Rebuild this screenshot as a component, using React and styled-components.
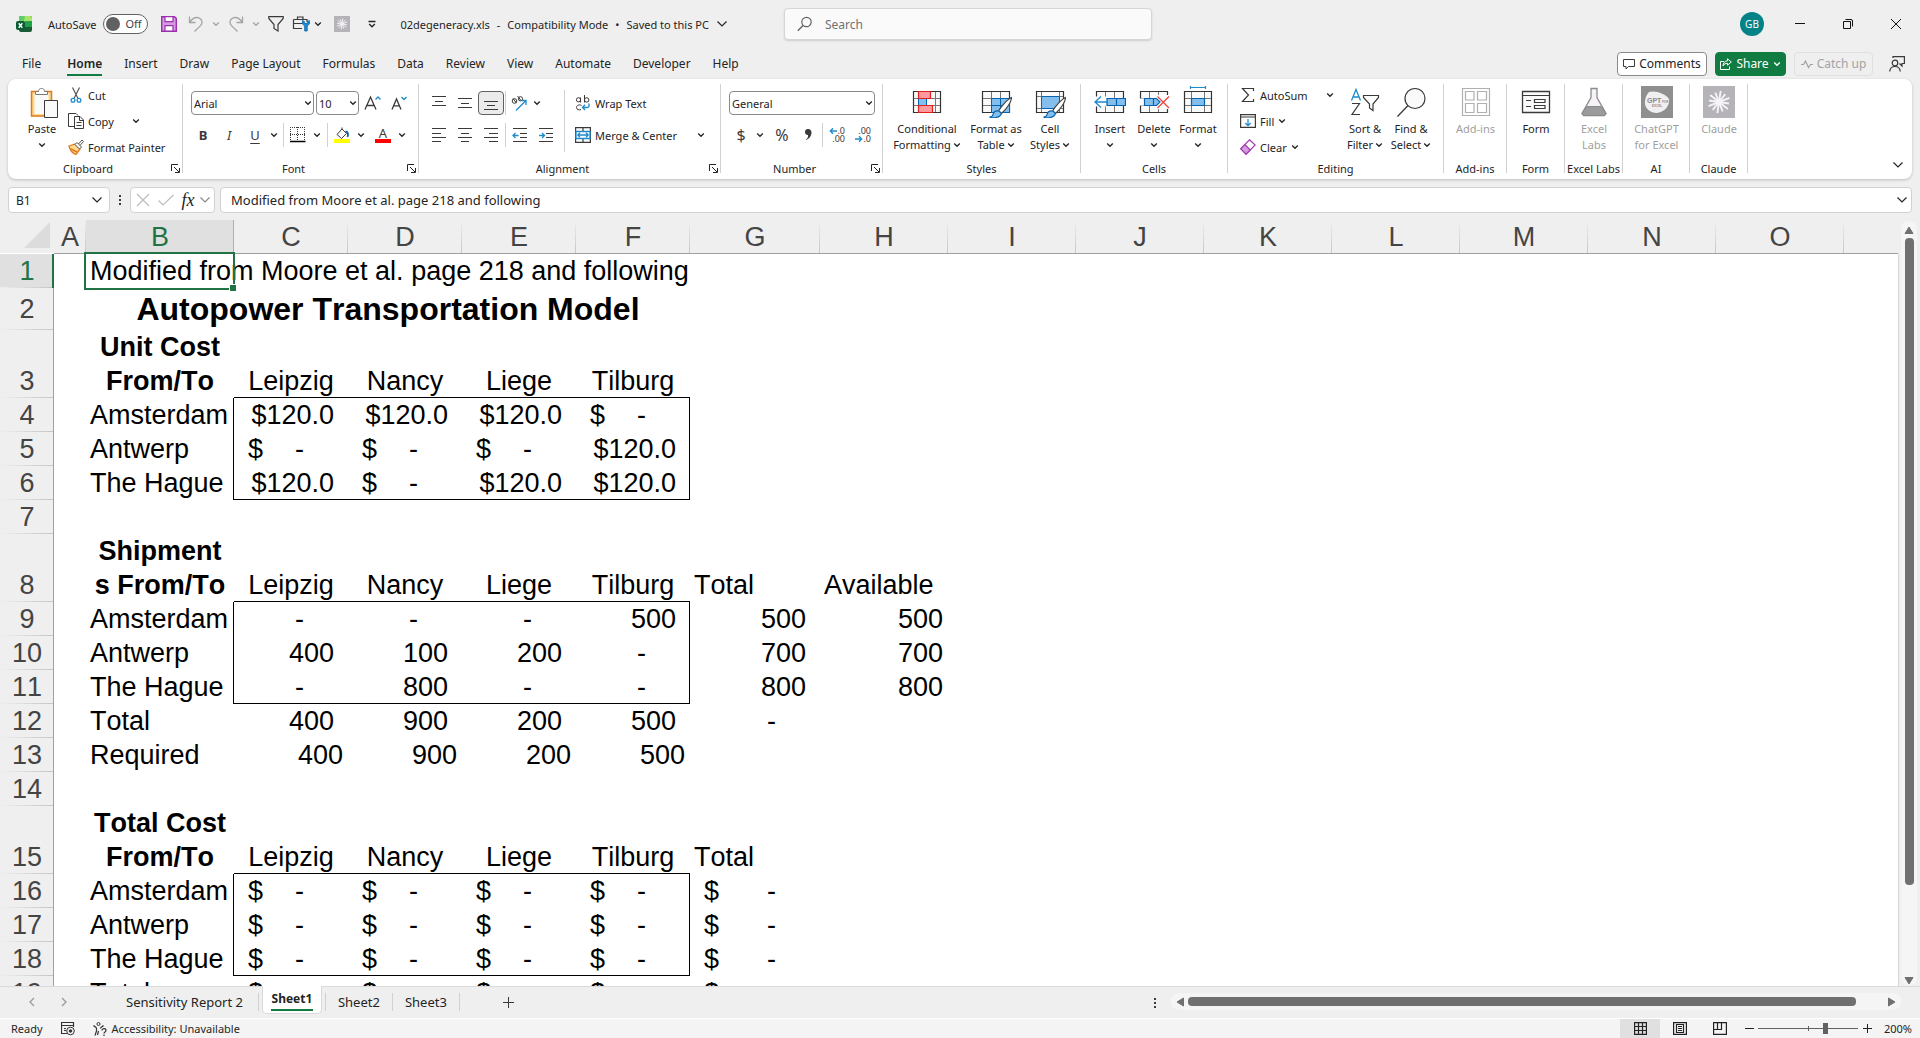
import React from "react";
import styled, { createGlobalStyle } from "styled-components";

const BLUE = "#1e8bcd";
const DARK_BLUE = "#0563af";
const LIGHT_BLUE = "#83beec";
const GREEN = "#107c41";

const GlobalStyle = createGlobalStyle`
  *, *::before, *::after { box-sizing: border-box; }
  body { margin: 0; background: #efefef; }
  body, button, input, select {
    font-family: "Noto Sans", "Open Sans", sans-serif;
    font-size: 11px;
    color: #242424;
  }
  button { border: 0; background: none; padding: 0; margin: 0; }
`;

/* ---------- shared parts ---------- */

const Page = styled.div`
  display: flex;
  flex-direction: column;
  height: 100vh;
  overflow: hidden;
  background: #efefef;
`;

const Svg = styled.svg`
  display: block;
  flex: none;
  fill: none;
  stroke: ${(p) => p.$color || "#3b3a39"};
  stroke-width: 1;
`;

const Icon = ({ w = 16, h = w, color, children }) => (
  <Svg width={w} height={h} viewBox={`0 0 ${w} ${h}`} $color={color} aria-hidden="true">
    {children}
  </Svg>
);

const Caret = ({ color = "#242424" }) => (
  <Icon w={8} h={6} color={color}>
    <path d="M1.2 1.5 4 4.3 6.8 1.5" strokeWidth="1.3" />
  </Icon>
);

const WideCaret = ({ color = "#242424" }) => (
  <Icon w={12} h={8} color={color}>
    <path d="M1.5 1.5 6 6 10.5 1.5" strokeWidth="1.2" />
  </Icon>
);

const IconButton = styled.button`
  display: flex;
  align-items: center;
  justify-content: center;
  flex: none;
  width: ${(p) => p.$w || 26}px;
  height: 24px;
  border-radius: 4px;
  border: 1px solid ${(p) => (p.$on ? "#616161" : "transparent")};
  background: ${(p) => (p.$on ? "#ebebeb" : "transparent")};
`;

const CaretButton = ({ label, color }) => (
  <IconButton $w={12} aria-label={label}>
    <Caret color={color} />
  </IconButton>
);

const Dots = () => (
  <Icon w={4} h={12}>
    <path d="M1 1h2v2h-2zM1 5h2v2h-2zM1 9h2v2h-2z" fill="#3b3a39" stroke="none" />
  </Icon>
);

/* ---------- title bar ---------- */

const TitleBar = styled.header`
  display: grid;
  grid-template-columns: minmax(0, 1fr) 368px minmax(0, 1fr);
  align-items: center;
  flex: none;
  height: 48px;
  padding-left: 16px;
`;

const QuickAccess = styled.div`
  display: flex;
  align-items: center;
  white-space: nowrap;
`;

const AutoSave = styled.label`
  display: flex;
  align-items: center;
  gap: 7px;
  margin: 0 8px 0 16px;
`;

const Toggle = styled.input`
  appearance: none;
  display: flex;
  align-items: center;
  width: 45px;
  height: 20px;
  margin: 0;
  padding: 0 5px 0 2px;
  border: 1px solid #616161;
  border-radius: 10px;
  background: #fff;
  &::before {
    content: "";
    width: 14px;
    height: 14px;
    border-radius: 50%;
    background: #616161;
  }
  &::after {
    content: "Off";
    margin-left: 5px;
    color: #424242;
    line-height: 16px;
  }
`;

const DocumentName = styled.button`
  display: flex;
  align-items: center;
  gap: 7px;
  margin-left: 16px;
`;

const SearchBox = styled.label`
  display: flex;
  align-items: center;
  gap: 12px;
  height: 32px;
  padding: 0 12px;
  border: 1px solid #d6d6d6;
  border-radius: 4px;
  background: #fafafa;
  box-shadow: 0 1px 2px rgba(0, 0, 0, 0.14);
`;

const SearchInput = styled.input`
  flex: 1;
  min-width: 0;
  border: 0;
  padding: 0;
  background: none;
  font-size: 12px;
  outline: none;
  &::placeholder { color: #707070; opacity: 1; }
`;

const WindowControls = styled.div`
  display: flex;
  align-items: center;
  justify-content: flex-end;
`;

const Avatar = styled.button`
  width: 24px;
  height: 24px;
  margin-right: 12px;
  border-radius: 50%;
  background: #038387;
  color: #fff;
  font-size: 10px;
`;

/* ---------- ribbon tabs ---------- */

const TabRow = styled.nav`
  display: flex;
  align-items: center;
  justify-content: space-between;
  flex: none;
  height: 31px;
  padding: 0 7px 0 12px;
`;

const Tabs = styled.div`
  display: flex;
  align-self: flex-end;
  gap: 2px;
  margin-bottom: 3px;
`;

const Tab = styled.button`
  padding: 0 10px;
  font-size: 12px;
  white-space: nowrap;
  font-weight: ${(p) => (p.$active ? 600 : 400)};
  &:first-child { margin-right: 4px; }
  span {
    display: block;
    height: 22px;
    line-height: 20px;
    border-bottom: 2px solid ${(p) => (p.$active ? GREEN : "transparent")};
  }
`;

const TabActions = styled.div`
  display: flex;
  align-items: center;
  gap: 8px;
`;

const ActionButton = styled.button`
  display: flex;
  align-items: center;
  justify-content: center;
  gap: 4px;
  height: 24px;
  width: ${(p) => p.$w}px;
  border: 1px solid ${(p) => p.$border};
  border-radius: 4px;
  background: ${(p) => p.$bg};
  color: ${(p) => p.$fg};
  font-size: 12px;
  white-space: nowrap;
`;

/* ---------- ribbon ---------- */

const Ribbon = styled.section`
  display: flex;
  flex: none;
  height: 100px;
  margin: 0 8px;
  border-radius: 8px;
  background: #fff;
  box-shadow: 0 1px 3px rgba(0, 0, 0, 0.22);
`;

const GroupBox = styled.div`
  display: flex;
  flex-direction: column;
  flex: none;
  width: ${(p) => p.$w}px;
  padding-top: 3px;
  background: linear-gradient(#d1d1d1, #d1d1d1) right 5px / 1px 89px no-repeat;
`;

const GroupBody = styled.div`
  display: flex;
  height: 78px;
  padding-left: ${(p) => p.$pad || 0}px;
  justify-content: ${(p) => (p.$center ? "center" : "flex-start")};
`;

const GroupFooter = styled.div`
  display: flex;
  align-items: center;
  height: 17px;
  padding-right: 1px;
`;

const GroupLabel = styled.span`
  flex: 1;
  text-align: center;
  white-space: nowrap;
  line-height: 16px;
`;

const Launcher = styled.button`
  display: flex;
  width: 14px;
  height: 14px;
  align-items: center;
  justify-content: center;
`;

const Group = ({ name, w, pad, center, launcher, children }) => (
  <GroupBox $w={w}>
    <GroupBody $pad={pad} $center={center}>{children}</GroupBody>
    <GroupFooter>
      <GroupLabel>{name}</GroupLabel>
      {launcher && (
        <Launcher aria-label={`${name} settings`}>
          <Icon w={9} color="#242424">
            <path d="M.5 7V.5H7M3 3l5 5M8.5 4v4.5H4" />
          </Icon>
        </Launcher>
      )}
    </GroupFooter>
  </GroupBox>
);

const BigButton = styled.button`
  display: flex;
  flex-direction: column;
  align-items: center;
  flex: none;
  width: ${(p) => p.$w}px;
  padding-top: 4px;
  color: ${(p) => (p.disabled ? "#a0a0a0" : "#242424")};
`;

const BigLabel = styled.span`
  display: flex;
  align-items: center;
  justify-content: center;
  gap: 2px;
  height: 16px;
  line-height: 16px;
  white-space: nowrap;
`;

const BigIcon = styled.span`
  display: block;
  height: 35px;
`;

const Big = ({ w, icon, lines, caret, ownCaret, disabled }) => (
  <BigButton $w={w} disabled={disabled}>
    <BigIcon>{icon}</BigIcon>
    {lines.map((line, i) => (
      <BigLabel key={line}>
        {line}
        {caret && i === lines.length - 1 && <Caret />}
      </BigLabel>
    ))}
    {ownCaret && <BigLabel><Caret /></BigLabel>}
  </BigButton>
);

const Stack = styled.div`
  display: flex;
  flex-direction: column;
  width: ${(p) => p.$w}px;
`;

const CommandRow = styled.div`
  display: flex;
  align-items: center;
  height: 26px;
`;

const Command = styled.button`
  display: flex;
  align-items: center;
  gap: 4px;
  height: 24px;
  white-space: nowrap;
`;

const Spread = styled.div`
  display: flex;
  width: ${(p) => p.$w}px;
`;

const Tools = styled.div`
  display: flex;
  flex-direction: column;
  gap: 8px;
  padding-top: 9px;
`;

const ToolRow = styled.div`
  display: flex;
  align-items: center;
  height: 24px;
`;

const Rule = styled.span`
  flex: none;
  width: 1px;
  height: ${(p) => p.$h ?? 24}px;
  margin: ${(p) => p.$margin || "0 1px"};
  background: #d1d1d1;
`;

const SelectBox = styled.div`
  display: grid;
  align-items: center;
  width: ${(p) => p.$w}px;
  height: 24px;
  margin: 0 1px;
  > * { grid-area: 1 / 1; }
  svg {
    justify-self: end;
    margin-right: 2px;
    pointer-events: none;
  }
`;

const Select = styled.select`
  appearance: none;
  width: 100%;
  height: 24px;
  padding: 0 2px;
  border: 1px solid #8a8a8a;
  border-radius: 4px;
  background: #fff;
`;

const Dropdown = ({ w, label, value }) => (
  <SelectBox $w={w}>
    <Select aria-label={label} defaultValue={value}>
      <option>{value}</option>
    </Select>
    <Caret />
  </SelectBox>
);

const Letter = styled.span`
  font-size: ${(p) => p.$size || 13}px;
  line-height: 18px;
  color: #3b3a39;
  font-weight: ${(p) => (p.$bold ? 700 : 400)};
  font-style: ${(p) => (p.$italic ? "italic" : "normal")};
  text-decoration: ${(p) => (p.$under ? "underline" : "none")};
  text-underline-offset: 3px;
`;

const ColorLetter = styled.span`
  width: 16px;
  border-bottom: 4px solid #f00;
  font-size: 13px;
  line-height: 12px;
  text-align: center;
  color: #3b3a39;
`;

const Spacer = styled.span`
  flex: 1;
`;

const Collapse = styled.button`
  align-self: flex-end;
  display: flex;
  width: 28px;
  height: 28px;
  align-items: center;
  justify-content: center;
`;

/* ---------- formula bar ---------- */

const FormulaBar = styled.div`
  display: flex;
  align-items: center;
  flex: none;
  height: 26px;
  margin: 8px 8px 7px;
`;

const Field = styled.div`
  display: flex;
  align-items: center;
  flex: ${(p) => (p.$w ? "none" : 1)};
  width: ${(p) => (p.$w ? `${p.$w}px` : "auto")};
  height: 26px;
  border: 1px solid #d1d1d1;
  border-radius: 4px;
  background: #fff;
  padding-right: 3px;
  justify-content: space-between;
`;

const FieldInput = styled.input`
  flex: 1;
  min-width: 0;
  height: 22px;
  border: 0;
  padding: 0 0 0 ${(p) => p.$pad}px;
  background: none;
  outline: none;
  font-size: ${(p) => p.$size || 12}px;
`;

const DotsSlot = styled.span`
  display: flex;
  justify-content: center;
  width: 20px;
`;

const FxLabel = styled.span`
  font-family: "Liberation Serif", serif;
  font-style: italic;
  font-size: 18px;
  line-height: 20px;
`;

/* ---------- sheet ---------- */

const SheetArea = styled.main`
  display: flex;
  flex: 1;
  min-height: 0;
`;

const GridView = styled.div`
  flex: 1;
  min-width: 0;
  overflow: hidden;
`;

const Grid = styled.table`
  width: 100%;
  table-layout: fixed;
  border-collapse: separate;
  border-spacing: 0;
  font-family: "Liberation Sans", Arial, sans-serif;
  font-size: 27px;
  font-kerning: none;
  line-height: 34px;
  color: #000;
`;

const ColHead = styled.th`
  height: 34px;
  padding: 0;
  font-weight: 400;
  line-height: 32px;
  color: ${(p) => (p.$active ? "#217346" : "#444")};
  background: ${(p) =>
    p.$active
      ? "linear-gradient(#b0b0b0, #b0b0b0) right top / 1px 100% no-repeat #e0e0e0"
      : p.$last
      ? "#efefef"
      : "linear-gradient(#efefef, #c4c4c4) right top / 1px 100% no-repeat #efefef"};
  box-shadow: inset 0 -1px 0 #a0a0a0;
`;

const Corner = styled.td`
  height: 34px;
  padding: 0 4px 4px 0;
  svg { margin-left: auto; }
`;

const RowHead = styled.th`
  padding: 0;
  vertical-align: ${(p) => (p.$middle ? "middle" : "bottom")};
  font-weight: 400;
  color: ${(p) => (p.$active ? "#217346" : "#444")};
  background: ${(p) =>
    `linear-gradient(to right, #efefef, #c4c4c4) left bottom / 100% 1px no-repeat ${p.$active ? "#e0e0e0" : "#efefef"}`};
  box-shadow: inset ${(p) => (p.$active ? "-2px 0 0 #217346" : "-1px 0 0 #a0a0a0")};
`;

const Row = styled.tr`
  height: ${(p) => p.$h}px;
`;

const INK = "#000";
const edges = {
  t: `inset 0 1px 0 ${INK}`,
  r: `inset -1px 0 0 ${INK}`,
  b: `inset 0 -1px 0 ${INK}`,
};

const Cell = styled.td`
  position: ${(p) => (p.$anchor ? "relative" : "static")};
  padding: 0 ${(p) => p.$right ?? 4}px 0 ${(p) => p.$left ?? 4}px;
  vertical-align: ${(p) => (p.$title ? "middle" : "bottom")};
  white-space: nowrap;
  text-align: ${(p) => p.$align || "left"};
  font-weight: ${(p) => (p.$bold ? 700 : 400)};
  font-size: ${(p) => (p.$title ? 32 : 27)}px;
  box-shadow: ${(p) => (p.$edges ? p.$edges.split("").map((e) => edges[e]).join(", ") : "none")};
`;

const Blank = styled.td`
  padding: 0;
`;

const Money = styled.span`
  display: flex;
  justify-content: space-between;
`;

const Selection = styled.span`
  position: absolute;
  inset: -2px -1px -2px -2px;
  border: 2px solid #217346;
  pointer-events: none;
  &::after {
    content: "";
    position: absolute;
    right: -3px;
    bottom: -3px;
    width: 6px;
    height: 6px;
    background: #217346;
    box-shadow: -1px -1px 0 #fff;
  }
`;

const VScroll = styled.div`
  display: flex;
  flex-direction: column;
  align-items: center;
  flex: none;
  width: 16px;
  margin: 1px 3px 0 2px;
  padding: 5px 0 1px;
  border-radius: 8px;
  background: #f5f5f5;
`;

const VTrack = styled.div`
  flex: 1;
  width: 9px;
  margin: 4px 0;
`;

const VThumb = styled.div`
  width: 9px;
  height: 88%;
  border-radius: 4px;
  background: #707070;
`;

const SheetSide = styled.div`
  flex: none;
  width: 1px;
  margin-top: 34px;
  background: #d6d6d6;
`;

/* ---------- bottom bars ---------- */

const SheetTabs = styled.nav`
  display: flex;
  align-items: flex-start;
  flex: none;
  height: 32px;
  box-shadow: inset 0 1px 0 #dadada;
`;

const NavArrow = styled.button`
  display: flex;
  align-items: center;
  justify-content: center;
  width: 32px;
  height: 32px;
`;

const SheetTab = styled.button`
  height: 32px;
  padding: 0 ${(p) => p.$pad || 12}px;
  font-size: 13px;
  white-space: nowrap;
`;

const ActiveSheetTab = styled.button`
  height: 28px;
  width: 60px;
  margin: 0 3px;
  padding: 0 8px;
  border: solid #dadada;
  border-width: 0 1px 1px;
  border-radius: 0 0 5px 5px;
  background: #fff;
  font-size: 12px;
  font-weight: 700;
  span {
    display: block;
    line-height: 20px;
    border-bottom: 2px solid ${GREEN};
  }
`;

const HScroll = styled.div`
  display: flex;
  align-items: center;
  width: 730px;
  height: 17px;
  margin: 7px 19px 0 14px;
  padding: 0 5px;
  border-radius: 8px;
  background: #f5f5f5;
`;

const HTrack = styled.div`
  flex: 1;
  margin: 0 4px;
`;

const HThumb = styled.div`
  width: 96%;
  height: 9px;
  border-radius: 4px;
  background: #707070;
`;

const DotsTall = styled.span`
  display: flex;
  align-items: center;
  height: 34px;
`;

const StatusBar = styled.footer`
  display: flex;
  align-items: center;
  flex: none;
  height: 20px;
  padding: 0 8px 0 11px;
  border-top: 1px solid #fff;
  background: #f4f4f4;
`;

const StatusItem = styled.span`
  display: flex;
  align-items: center;
  gap: 5px;
  margin-right: 18px;
  line-height: 18px;
`;

const ViewButton = styled.button`
  display: flex;
  align-items: center;
  justify-content: center;
  width: 40px;
  height: 19px;
  background: ${(p) => (p.$on ? "#e0e0e0" : "transparent")};
`;

const ZoomButton = styled.button`
  display: flex;
  align-items: center;
  justify-content: center;
  width: 18px;
  height: 18px;
`;

const ZoomSlider = styled.input`
  appearance: none;
  width: 100px;
  height: 12px;
  margin: 0;
  background:
    linear-gradient(#616161, #616161) center / 100% 1px no-repeat,
    linear-gradient(#616161, #616161) center / 1px 5px no-repeat;
  &::-webkit-slider-thumb {
    appearance: none;
    width: 5px;
    height: 11px;
    background: #616161;
  }
`;

const ZoomValue = styled.span`
  width: 36px;
  text-align: right;
`;

/* ---------- drawings ---------- */

const ExcelLogo = () => (
  <Icon w={16}>
    <g stroke="none">
      <rect x="3" y="0" width="13" height="16" rx="2" fill="#185c37" />
      <path d="M5 0h5v6H3V2a2 2 0 0 1 2-2z" fill="#5fd06a" />
      <path d="M9 0h5a2 2 0 0 1 2 2v4H8z" fill="#a9e56b" />
      <path d="M9 5h7v6H9z" fill="#21a04a" />
      <rect x="0" y="5" width="9" height="9" rx="2" fill="#0b5c35" />
    </g>
    <path d="M2.7 7.2 6.3 11.8M6.3 7.2 2.7 11.8" stroke="#fff" strokeWidth="1.4" />
  </Icon>
);

const SaveIcon = () => (
  <Icon color="#9b2fae">
    <path d="M.7.7H13.5l1.800 1.800v12.800H.7z" fill="#d59be0" strokeWidth="1.4" />
    <path d="M4 .7h8v5H4zM4 15V9.7h8V15z" fill="#fff" strokeWidth="1.2" />
  </Icon>
);

const UndoIcon = () => (
  <Icon color="#a3a3a3">
    <path d="M1.5.5V6.5H7.5M1.8 6.2C4 3 7 1 10 1.6c4 .9 5.200 5 2.5 8L6.500 15.500" strokeWidth="1.3" />
  </Icon>
);

const RedoIcon = () => (
  <Icon color="#a3a3a3">
    <path d="M14.500.5V6.500H8.500M14.200 6.200C12 3 9 1 6 1.600c-4 .9-5.200 5-2.500 8L9.500 15.500" strokeWidth="1.3" />
  </Icon>
);

const FunnelIcon = () => (
  <Icon>
    <path d="M.8.7H15.200V2.500L10 8.500V15L6 12.500V8.500L.8 2.500z" strokeWidth="1.2" />
  </Icon>
);

const ToolboxIcon = () => (
  <Icon w={18}>
    <path d="M1.500 4.500H15V7M1.500 4.500V13.500H10M5.500 4.500V2H11V4.500M1.500 8.500H10" strokeWidth="1.2" />
    <path d="M10.500 5.500V9L12.700 11V16H15.200V11L17.400 9V5.500L15.500 6.500V8.500H12.400V6.500z" fill={BLUE} stroke={DARK_BLUE} strokeWidth=".8" />
  </Icon>
);

const BURST = Array.from({ length: 12 }, (_, i) => {
  const a = (i * Math.PI) / 6 + 0.15;
  const r = i % 2 ? 1 : 0.9;
  return [Math.cos(a) * r, Math.sin(a) * r];
});

const ClaudeIcon = ({ size }) => (
  <Icon w={size}>
    <rect width={size} height={size} fill="#b5b3b7" stroke="none" />
    {BURST.map(([x, y], i) => (
      <line
        key={i}
        x1={size / 2}
        y1={size / 2}
        x2={size / 2 + x * size * 0.35}
        y2={size / 2 + y * size * 0.35}
        stroke="#f6f4f8"
        strokeWidth={size / 17}
      />
    ))}
  </Icon>
);

const PasteIcon = () => (
  <Icon w={32}>
    <path d="M5.500 5.500H25.500V30H5.500z" fill="#fbd98d" stroke="#e07a1f" strokeWidth="1.500" />
    <path d="M8.500 7H22.500V28H8.500z" fill="#fafafa" stroke="none" />
    <path d="M9.500 8.500V5.500H12.500C13 2.500 14 2.500 15.500 2.500s2.500 0 3 3H21.500V8.500z" fill="#fff" stroke="#777" />
    <path d="M18.500 14.500H31.500V31.500H18.500z" fill="#fafafa" />
  </Icon>
);

const CutIcon = () => (
  <Icon>
    <path d="M4.500.5 10 11.500M11.500.5 6 11.500" stroke="#555" strokeWidth="1.200" />
    <circle cx="5" cy="13.300" r="1.900" stroke={BLUE} strokeWidth="1.300" />
    <circle cx="11" cy="13.300" r="1.900" stroke={BLUE} strokeWidth="1.300" />
  </Icon>
);

const CopyIcon = () => (
  <Icon>
    <path d="M6 13.500H.5V.5H8L10 2.500" fill="none" />
    <path d="M6.500 3.500H12L15.500 7V15.500H6.500z" fill="#fafafa" />
    <path d="M11.500 3.500V7.500H15.500M8.500 9.500h5M8.500 12.500h5" />
  </Icon>
);

const PainterIcon = () => (
  <Icon>
    <path d="M1 7 7 5l5 5-4 5.500C5.500 14.500 2 11.500 1 7z" fill="#fbd98d" stroke="#e07a1f" strokeWidth="1.300" />
    <path d="M3 10 9 13" stroke="#e07a1f" strokeWidth="1.500" />
    <path d="M7 5.500 9 3.500l4.500 4.500L11.500 10zM10.500 5 14 1l1.500 1.500L12 6.500" fill="#fff" stroke="#555" />
  </Icon>
);

const GrowIcon = ({ down }) => (
  <Icon w={18}>
    <path d={down ? "M2 15.500 6.500 5 11 15.500M3.700 11.800H9.300" : "M1 15.500 6.500 3 12 15.500M3 11.500H10"} strokeWidth="1.300" />
    <path d={down ? "M11.500 3 14 5.500 16.500 3" : "M11.500 5.500 14 3 16.500 5.500"} stroke={BLUE} strokeWidth="1.400" />
  </Icon>
);

const BorderIcon = () => (
  <Icon>
    <path d="M0 .5H15M.5 0V14M14.500 0V14M7.500 0V14M0 7.500H15" strokeDasharray="1 1" />
    <path d="M0 14.500H15.500" stroke="#000" strokeWidth="1.500" />
  </Icon>
);

const FillColorIcon = () => (
  <Icon>
    <path d="M3 7.500 8 2l4.500 4.500L7.500 11.500z" fill="#fafafa" />
    <path d="M8 2V.5" />
    <path d="M11.500 4.500C14 4.500 14.500 7 13.500 10" stroke={DARK_BLUE} strokeWidth="1.800" />
    <path d="M0 12H16V16H0z" fill="#ff0" stroke="none" />
  </Icon>
);

const LINES = {
  top: "M1 1.500H15M4 6.500H12M1 10.500H15",
  middle: "M1 3.500H15M4 8.500H12M1 12.500H15",
  bottom: "M1 6.500H15M4 10.500H12M1 14.500H15",
  left: "M1 1.500H15M1 6.500H10M1 10.500H15M1 14.500H10",
  center: "M1 1.500H15M4 6.500H12M1 10.500H15M4 14.500H12",
  right: "M1 1.500H15M6 6.500H15M1 10.500H15M6 14.500H15",
};

const LinesIcon = ({ kind }) => (
  <Icon><path d={LINES[kind]} /></Icon>
);

const IndentIcon = ({ out }) => (
  <Icon>
    <path d="M1 1.500H15M8 6.500H15M8 10.500H15M1 14.500H15" />
    <path d={out ? "M1 8.500H6.500M3.500 6 1 8.500 3.500 11" : "M1 8.500H6.500M4 6 6.500 8.500 4 11"} stroke={BLUE} strokeWidth="1.300" />
  </Icon>
);

const OrientIcon = () => (
  <Icon>
    <circle cx="3.500" cy="6" r="2.300" />
    <path d="M2 3.500 5.500 8M6.500 1 10 5.500" />
    <circle cx="9.500" cy="3.800" r="2.100" />
    <path d="M5 15.500 15 5.500M10.500 5.500H15V10" stroke={BLUE} strokeWidth="1.300" />
  </Icon>
);

const WrapIcon = () => (
  <Icon>
    <circle cx="3.500" cy="4.800" r="2.100" />
    <path d="M5.500 2.500V7.500M9.500 0V7.500M6.500 10.500C4 9 1.500 10.500 1.500 12.500S4 15.500 6 14.500" />
    <circle cx="11.700" cy="4.900" r="2.200" />
    <path d="M13.500 8.500C15 10.500 14 12.500 12 12.500H7.500M10 9.800 7.500 12.500 10 15" stroke={BLUE} strokeWidth="1.300" />
  </Icon>
);

const MergeIcon = () => (
  <Icon>
    <path d="M.6.6H15.400V15.400H.6zM8 .5V4M8 12V15.500" strokeWidth="1.200" />
    <path d="M1 4.500H15V11.500H1z" fill="#fff" stroke={BLUE} strokeWidth="1.300" />
    <path d="M3 8H13M5 5.800 2.800 8 5 10.200M11 5.800 13.200 8 11 10.200" stroke={BLUE} strokeWidth="1.300" />
  </Icon>
);

const DecimalText = styled.span`
  display: grid;
  grid-template-columns: 8px 8px;
  font-size: 9px;
  line-height: 8px;
  color: #3b3a39;
  justify-items: end;
`;

const DecimalArrow = ({ right }) => (
  <Icon w={8}>
    <path d={right ? "M0 4H7M4 1.300 6.700 4 4 6.700" : "M8 4H1M4 1.300 1.300 4 4 6.700"} stroke={BLUE} strokeWidth="1.300" />
  </Icon>
);

const GridLines = ({ x = [11, 20], y = [12, 19] }) => (
  <>
    <path d="M2.500 5.500H29.500V26.500H2.500z" fill="#fafafa" stroke="#333" strokeWidth="1.200" />
    <path d={x.map((v) => `M${v}.500 6V26`).join("") + y.map((v) => `M3 ${v}.500H29`).join("")} stroke="#777" />
  </>
);

const Brush = () => (
  <>
    <path d="M31.500 11.500C28 13 21.500 20 18.500 25l3 2.500C26.500 23 31.500 16 31.500 11.500z" fill="#fff" stroke="#444" strokeWidth="1.200" />
    <path d="M19 25c-4-.5-5.500 1-6 3.500-.3 1.800-1.500 2.500-3.500 2.500C12 32.300 19.500 32.500 21.500 27.500z" fill={LIGHT_BLUE} stroke={DARK_BLUE} strokeWidth="1.200" />
  </>
);

const ConditionalIcon = () => (
  <Icon w={32}>
    <GridLines x={[7, 24]} />
    <path d="M7.500 12.500H15.500V19.500H7.500z" fill={LIGHT_BLUE} stroke={DARK_BLUE} />
    <path d="M7.500 5.500H19.500V12.500H7.500zM7.500 19.500H21.500V26.500H7.500z" fill="#ff9aa0" stroke="#e0201b" strokeWidth="1.200" />
  </Icon>
);

const TableIcon = () => (
  <Icon w={32}>
    <GridLines />
    <path d="M11.500 12.500H29.500V26.500H11.500zM20.500 12.500V26.500M11.500 19.500H29.500" fill={LIGHT_BLUE} stroke={DARK_BLUE} />
    <Brush />
  </Icon>
);

const CellStylesIcon = () => (
  <Icon w={32}>
    <GridLines x={[7, 25]} y={[10, 22]} />
    <path d="M7.500 10.500H25.500V22.500H7.500z" fill={LIGHT_BLUE} stroke={DARK_BLUE} />
    <Brush />
  </Icon>
);

const InsertIcon = () => (
  <Icon w={32}>
    <GridLines />
    <path d="M0 10.500H13V20.500H0z" fill="#fff" stroke="none" />
    <path d="M13 12.500H31.500V19.500H13zM22.500 12.500V19.500" fill={LIGHT_BLUE} stroke={DARK_BLUE} strokeWidth="1.200" />
    <path d="M14 16H1M7 10.500 1 16l6 5.500" stroke={BLUE} strokeWidth="1.300" />
  </Icon>
);

const DeleteIcon = () => (
  <Icon w={32}>
    <GridLines />
    <path d="M0 12.500H6V19.500H0zM19 9H32V23H19z" fill="#fff" stroke="none" />
    <path d="M6.500 12.500H18.500L22 16 18.500 19.500H6.500zM15.500 12.500V19.500" fill={LIGHT_BLUE} stroke={DARK_BLUE} strokeWidth="1.200" />
    <path d="M19.500 10.500 31 22M31 10.500 19.500 22" stroke="#f0433c" strokeWidth="1.300" />
  </Icon>
);

const FormatIcon = () => (
  <Icon w={32}>
    <GridLines x={[9, 22]} />
    <path d="M9.500 12.500H22.500V19.500H9.500z" fill={LIGHT_BLUE} stroke={DARK_BLUE} strokeWidth="1.200" />
    <path d="M8.500 1.500H23.500M8.500 0V3M23.500 0V3" stroke={BLUE} strokeWidth="1.200" />
  </Icon>
);

const SumIcon = () => (
  <Icon>
    <path d="M13.500 4V1.500H2.500L8.500 8 2.500 14.500H13.500V12" strokeWidth="1.200" />
  </Icon>
);

const FillIcon = () => (
  <Icon>
    <path d="M.6 1.600H15.400V14.400H.6zM.6 4H15.400" strokeWidth="1.200" />
    <path d="M8 6V12.500M5.300 10 8 12.700 10.700 10" stroke={BLUE} strokeWidth="1.300" />
  </Icon>
);

const ClearIcon = () => (
  <Icon color="#a33bb0">
    <path d="M9.500.8 15.200 6 6 15.200.8 9.800z" fill="#fff" strokeWidth="1.200" />
    <path d="M4.800 5.500 10.300 11 6 15.200.8 9.800z" fill="#d59be0" strokeWidth="1.200" />
  </Icon>
);

const SortIcon = () => (
  <Icon w={32}>
    <path d="M2.500 14.500 7 3.500 11.500 14.500M4 11H10" stroke={BLUE} strokeWidth="1.300" />
    <path d="M3 17.500H10.500L3 28.500H11" strokeWidth="1.200" />
    <path d="M14.500 9.500H29.500V11.500L24 18V24.500L20.500 22V18L14.500 11.500z" strokeWidth="1.200" />
  </Icon>
);

const FindIcon = () => (
  <Icon w={32}>
    <circle cx="20" cy="12.500" r="10" fill="#fafafa" strokeWidth="1.200" />
    <path d="M13 19.500 2.500 30.500" strokeWidth="1.300" />
  </Icon>
);

const AddInsIcon = () => (
  <Icon w={32} color="#b0b0b0">
    <path d="M2.500 2.500H29.500V29.500H2.500zM5.500 5.500H14V14H5.500zM17.500 5.500H26.500V14H17.500zM5.500 17.500H14V26.500H5.500zM17.500 17.500H26.500V26.500H17.500z" strokeWidth="1.200" />
  </Icon>
);

const FormIcon = () => (
  <Icon w={32}>
    <path d="M2.500 5.500H29.500V26.500H2.500z" fill="#fafafa" strokeWidth="1.300" />
    <path d="M2.500 9.500H29.500M6 14.500H11M6 20.500H11M14.500 13.500H25V16.500H14.500zM14.500 19.500H25V22.500H14.500z" strokeWidth="1.200" />
  </Icon>
);

const LabsIcon = () => (
  <Icon w={32} color="#8a8a8a">
    <path d="M13 2.500H19V11.500L28 27.500 26.500 29.500H5.500L4 27.500 13 11.500z" fill="#f6f2f8" strokeWidth="1.300" />
    <path d="M9 20.500H23L28 27.500 26.500 29.500H5.500L4 27.500z" fill="#9b9a9d" />
  </Icon>
);

const GptIcon = () => (
  <Icon w={32}>
    <rect width="32" height="32" fill="#8f8f8f" stroke="none" />
    <path d="M8 6C14 4 25 8 28 13c1 5-3 13-12 14C8 27 3 21 4 15c.5-4 2-7 4-9z" fill="#f2eff3" stroke="none" />
    <g fill="#8a8a8a" stroke="none" fontFamily="Liberation Sans, sans-serif" fontWeight="700">
      <text x="6" y="17" fontSize="7">GPT</text>
      <text x="21" y="17" fontSize="3">FOR</text>
      <text x="11" y="21" fontSize="3">EXCEL</text>
    </g>
  </Icon>
);

/* ---------- sheet data ---------- */

const COLUMNS = [
  ["A", 32], ["B", 148], ["C", 114], ["D", 114], ["E", 114], ["F", 114], ["G", 130],
  ["H", 128], ["I", 128], ["J", 128], ["K", 128], ["L", 128], ["M", 128], ["N", 128], ["O", 128],
];

const CITIES = ["Leipzig", "Nancy", "Liege", "Tilburg"];

const label = (text) => ({ kind: "text", text });
const amount = (text) => ({ kind: "amount", text });
const plain = (text) => ({ kind: "plain", text });
const money = () => ({ kind: "money" });
const dash = () => ({ kind: "dash" });
const heading = (first, second, extra = []) => [
  { kind: "heading", lines: [first, second] },
  ...CITIES.map((text) => ({ kind: "city", text })),
  ...extra.map(label),
];

const amounts = (...values) =>
  values.map((v) => (v === "-" ? dash() : v === "$" ? money() : amount(v)));

const ROWS = [
  { n: 1, h: 34, cells: [{ kind: "selected", text: "Modified from Moore et al. page 218 and following" }] },
  { n: 2, h: 42, cells: [{ kind: "title", text: "Autopower Transportation Model" }] },
  { n: 3, h: 68, cells: heading("Unit Cost", "From/To"), over: true },
  { n: 4, h: 34, cells: [label("Amsterdam"), ...amounts("$120.0", "$120.0", "$120.0", "$")], boxed: true },
  { n: 5, h: 34, cells: [label("Antwerp"), ...amounts("$", "$", "$", "$120.0")], boxed: true },
  { n: 6, h: 34, cells: [label("The Hague"), ...amounts("$120.0", "$", "$120.0", "$120.0")], boxed: true, over: true },
  { n: 7, h: 34, cells: [] },
  { n: 8, h: 68, cells: heading("Shipment", "s From/To", ["Total", "Available"]), over: true },
  { n: 9, h: 34, cells: [label("Amsterdam"), ...amounts("-", "-", "-", "500", "500"), plain("500")], boxed: true },
  { n: 10, h: 34, cells: [label("Antwerp"), ...amounts("400", "100", "200", "-", "700"), plain("700")], boxed: true },
  { n: 11, h: 34, cells: [label("The Hague"), ...amounts("-", "800", "-", "-", "800"), plain("800")], boxed: true, over: true },
  { n: 12, h: 34, cells: [label("Total"), ...amounts("400", "900", "200", "500", "-")] },
  { n: 13, h: 34, cells: [label("Required"), ...["400", "900", "200", "500"].map(plain)] },
  { n: 14, h: 34, cells: [] },
  { n: 15, h: 68, cells: heading("Total Cost", "From/To", ["Total"]), over: true },
  { n: 16, h: 34, cells: [label("Amsterdam"), ...amounts("$", "$", "$", "$", "$")], boxed: true },
  { n: 17, h: 34, cells: [label("Antwerp"), ...amounts("$", "$", "$", "$", "$")], boxed: true },
  { n: 18, h: 34, cells: [label("The Hague"), ...amounts("$", "$", "$", "$", "$")], boxed: true, over: true },
  { n: 19, h: 34, cells: [label("Total"), ...amounts("$", "$", "$", "$", "$")] },
];

const cellEdges = (row, i) => {
  let e = "";
  if (row.boxed && (i === 0 || i === 4)) e += "r";
  if (row.over && i >= 1 && i <= 4) e += "b";
  return e;
};

const SheetCell = ({ cell, border }) => {
  switch (cell.kind) {
    case "selected":
      return <Cell $anchor>{cell.text}<Selection /></Cell>;
    case "title":
      return <Cell colSpan={5} $align="center" $bold $title>{cell.text}</Cell>;
    case "heading":
      return <Cell $align="center" $bold>{cell.lines[0]}<br />{cell.lines[1]}</Cell>;
    case "city":
      return <Cell $align="center" $edges={border}>{cell.text}</Cell>;
    case "amount":
      return <Cell $align="right" $right={14} $edges={border}>{cell.text}</Cell>;
    case "plain":
      return <Cell $align="right" $right={5} $edges={border}>{cell.text}</Cell>;
    case "dash":
      return <Cell $align="right" $right={44} $edges={border}>-</Cell>;
    case "money":
      return (
        <Cell $left={14} $right={44} $edges={border}>
          <Money><span>$</span><span>-</span></Money>
        </Cell>
      );
    default:
      return <Cell $edges={border}>{cell.text}</Cell>;
  }
};

const Sheet = () => (
  <Grid>
    <colgroup>
      <col width="54" />
      {COLUMNS.map(([name, w]) => <col key={name} width={w} />)}
      <col />
    </colgroup>
    <thead>
      <tr>
        <Corner>
          <Icon w={26}><path d="M26 0V26H0z" fill="#dcdcdc" stroke="none" /></Icon>
        </Corner>
        {COLUMNS.map(([name]) => (
          <ColHead key={name} scope="col" $active={name === "B"}>{name}</ColHead>
        ))}
        <ColHead as="td" $last />
      </tr>
    </thead>
    <tbody>
      {ROWS.map((row) => {
        const used = row.n === 2 ? 5 : row.cells.length;
        return (
          <Row key={row.n} $h={row.h}>
            <RowHead scope="row" $active={row.n === 1} $middle={row.n === 2}>{row.n}</RowHead>
            <Blank />
            {row.cells.map((cell, i) => (
              <SheetCell key={i} cell={cell} border={cellEdges(row, i)} />
            ))}
            <Blank colSpan={15 - used} />
          </Row>
        );
      })}
    </tbody>
  </Grid>
);

const SheetCanvas = styled.div`
  background: linear-gradient(#efefef, #efefef) top / 100% 33px no-repeat #fff;
`;

const TABS = ["File", "Home", "Insert", "Draw", "Page Layout", "Formulas", "Data", "Review", "View", "Automate", "Developer", "Help"];

/* ---------- page ---------- */

const TopBar = () => (
  <TitleBar>
    <QuickAccess>
      <ExcelLogo />
      <AutoSave>AutoSave<Toggle type="checkbox" role="switch" /></AutoSave>
      <IconButton aria-label="Save"><SaveIcon /></IconButton>
      <IconButton $w={28} aria-label="Undo"><UndoIcon /></IconButton>
      <CaretButton label="Undo list" color="#a3a3a3" />
      <IconButton $w={28} aria-label="Redo"><RedoIcon /></IconButton>
      <CaretButton label="Redo list" color="#a3a3a3" />
      <IconButton $w={28} aria-label="Filter"><FunnelIcon /></IconButton>
      <IconButton $w={22} aria-label="Tools"><ToolboxIcon /></IconButton>
      <CaretButton label="Tools list" />
      <IconButton $w={36} aria-label="Claude"><ClaudeIcon size={16} /></IconButton>
      <IconButton $w={24} aria-label="Customize toolbar">
        <Icon w={10} color="#242424"><path d="M1.500 2.500H8.500M2.200 5 5 7.800 7.800 5" strokeWidth="1.300" /></Icon>
      </IconButton>
      <DocumentName>
        <span>02degeneracy.xls</span>
        <span>-</span>
        <span>Compatibility Mode</span>
        <span>•</span>
        <span>Saved to this PC</span>
        <WideCaret />
      </DocumentName>
    </QuickAccess>
    <SearchBox>
      <Icon w={16}>
        <circle cx="9.500" cy="6" r="4.700" stroke="#616161" strokeWidth="1.200" />
        <path d="M6 9.500.8 14.800" stroke="#616161" strokeWidth="1.300" />
      </Icon>
      <SearchInput type="text" placeholder="Search" aria-label="Search" />
    </SearchBox>
    <WindowControls>
      <Avatar>GB</Avatar>
      <IconButton $w={48} aria-label="Minimize"><Icon w={10}><path d="M0 4.500H10" stroke="#111" /></Icon></IconButton>
      <IconButton $w={48} aria-label="Restore">
        <Icon w={10}><path d="M.5 2.500H7.500V9.500H.5zM2.500.5H8a1.500 1.500 0 0 1 1.500 1.500V7.500" stroke="#111" /></Icon>
      </IconButton>
      <IconButton $w={48} aria-label="Close"><Icon w={10}><path d="M0 0 10 10M10 0 0 10" stroke="#111" /></Icon></IconButton>
    </WindowControls>
  </TitleBar>
);

const RibbonTabs = () => (
  <TabRow>
    <Tabs>
      {TABS.map((t) => <Tab key={t} $active={t === "Home"}><span>{t}</span></Tab>)}
    </Tabs>
    <TabActions>
      <ActionButton $w={90} $bg="#fff" $fg="#242424" $border="#8a8a8a">
        <Icon w={12}><path d="M.5 1.500H11.500V8.500H5.500L3 11V8.500H.5z" /></Icon>
        Comments
      </ActionButton>
      <ActionButton $w={71} $bg={GREEN} $fg="#fff" $border={GREEN}>
        <Icon w={12} color="#fff">
          <path d="M4 3.500H.5V11.500H9.500V8.500M7.500.8 11.300 4 7.500 7.200V5.300C5.500 5.300 4 6 3 8 3 5 5 2.800 7.500 2.800z" />
        </Icon>
        Share
        <Caret color="#fff" />
      </ActionButton>
      <ActionButton $w={79} $bg="transparent" $fg="#a3a3a3" $border="#e0e0e0" disabled>
        <Icon w={12} color="#a3a3a3"><path d="M0 6.500H2.500L4.500 3 7.500 9.500 9.500 6.500H12" strokeWidth="1.200" /></Icon>
        Catch up
      </ActionButton>
      <IconButton $w={32} aria-label="Feedback">
        <Icon>
          <path d="M4 2V.6H15.400V7.500H13V10L10.500 7.500" strokeWidth="1.200" />
          <circle cx="6" cy="7" r="2.800" strokeWidth="1.200" />
          <path d="M.7 15.500C1 12 3 10.500 6 10.500s5 1.500 5.300 5" strokeWidth="1.200" />
        </Icon>
      </IconButton>
    </TabActions>
  </TabRow>
);

const ClipboardGroup = () => (
  <Group name="Clipboard" w={175} pad={8} launcher>
    <Big w={52} icon={<PasteIcon />} lines={["Paste"]} ownCaret />
    <Stack $w={110}>
      <CommandRow><Command><CutIcon />Cut</Command></CommandRow>
      <CommandRow>
        <Spread $w={62}><Command><CopyIcon />Copy</Command></Spread>
        <CaretButton label="Copy options" />
      </CommandRow>
      <CommandRow><Command><PainterIcon />Format Painter</Command></CommandRow>
    </Stack>
  </Group>
);

const FontGroup = () => (
  <Group name="Font" w={236} pad={7} launcher>
    <Tools>
      <ToolRow>
        <Dropdown w={123} label="Font" value="Arial" />
        <Dropdown w={43} label="Font size" value="10" />
        <IconButton aria-label="Increase font size"><GrowIcon /></IconButton>
        <IconButton aria-label="Decrease font size"><GrowIcon down /></IconButton>
      </ToolRow>
      <ToolRow>
        <IconButton aria-label="Bold"><Letter $bold>B</Letter></IconButton>
        <IconButton aria-label="Italic"><Letter $italic>I</Letter></IconButton>
        <IconButton aria-label="Underline"><Letter $under>U</Letter></IconButton>
        <CaretButton label="Underline options" />
        <Rule $margin="0 1px 0 3px" />
        <IconButton aria-label="Borders"><BorderIcon /></IconButton>
        <CaretButton label="Border options" />
        <Rule $margin="0 1px 0 4px" />
        <IconButton aria-label="Fill color"><FillColorIcon /></IconButton>
        <CaretButton label="Fill color options" />
        <Rule $h={0} />
        <IconButton aria-label="Font color"><ColorLetter>A</ColorLetter></IconButton>
        <CaretButton label="Font color options" />
      </ToolRow>
    </Tools>
  </Group>
);

const MergeRow = styled.div`
  display: flex;
  align-items: center;
  height: 24px;
  width: 132px;
  justify-content: space-between;
`;

const AlignmentGroup = () => (
  <Group name="Alignment" w={302} pad={7} launcher>
    <Tools>
      <ToolRow>
        <IconButton aria-label="Top align"><LinesIcon kind="top" /></IconButton>
        <IconButton aria-label="Middle align"><LinesIcon kind="middle" /></IconButton>
        <IconButton $on aria-label="Bottom align"><LinesIcon kind="bottom" /></IconButton>
        <Rule />
        <IconButton $w={24} aria-label="Orientation"><OrientIcon /></IconButton>
        <CaretButton label="Orientation options" />
      </ToolRow>
      <ToolRow>
        <IconButton aria-label="Align left"><LinesIcon kind="left" /></IconButton>
        <IconButton aria-label="Center"><LinesIcon kind="center" /></IconButton>
        <IconButton aria-label="Align right"><LinesIcon kind="right" /></IconButton>
        <Rule />
        <IconButton aria-label="Decrease indent"><IndentIcon out /></IconButton>
        <IconButton aria-label="Increase indent"><IndentIcon /></IconButton>
      </ToolRow>
    </Tools>
    <Rule $h={62} $margin="8px 10px 0 5px" />
    <Tools>
      <MergeRow><Command><WrapIcon />Wrap Text</Command></MergeRow>
      <MergeRow>
        <Command><MergeIcon />Merge &amp; Center</Command>
        <CaretButton label="Merge options" />
      </MergeRow>
    </Tools>
  </Group>
);

const NumberGroup = () => (
  <Group name="Number" w={162} pad={7} launcher>
    <Tools>
      <ToolRow><Dropdown w={146} label="Number format" value="General" /></ToolRow>
      <ToolRow>
        <IconButton aria-label="Accounting format"><Letter $size={16}>$</Letter></IconButton>
        <CaretButton label="Accounting options" />
        <Rule $h={0} />
        <IconButton aria-label="Percent"><Letter $size={16}>%</Letter></IconButton>
        <IconButton aria-label="Comma style">
          <Icon w={8} h={14}><path d="M4 1A3 3 0 0 0 4 7C4.500 9 3 11 1.500 12 5 11.500 7.500 8 7.500 4.500A3.300 3.300 0 0 0 4 1z" fill="#3b3a39" stroke="none" /></Icon>
        </IconButton>
        <Rule />
        <IconButton aria-label="Increase decimal">
          <DecimalText><DecimalArrow /><span>.0</span><span /><span>.00</span></DecimalText>
        </IconButton>
        <IconButton aria-label="Decrease decimal">
          <DecimalText><span /><span>.00</span><DecimalArrow right /><span>.0</span></DecimalText>
        </IconButton>
      </ToolRow>
    </Tools>
  </Group>
);

const EditingGroup = () => (
  <Group name="Editing" w={216} pad={12}>
    <Stack $w={102}>
      <CommandRow>
        <Spread $w={84}><Command><SumIcon />AutoSum</Command></Spread>
        <CaretButton label="AutoSum options" />
      </CommandRow>
      <CommandRow><Command><FillIcon />Fill <Caret /></Command></CommandRow>
      <CommandRow><Command><ClearIcon />Clear <Caret /></Command></CommandRow>
    </Stack>
    <Big w={46} icon={<SortIcon />} lines={["Sort &", "Filter"]} caret />
    <Big w={46} icon={<FindIcon />} lines={["Find &", "Select"]} caret />
  </Group>
);

const RibbonBar = () => (
  <Ribbon>
    <ClipboardGroup />
    <FontGroup />
    <AlignmentGroup />
    <NumberGroup />
    <Group name="Styles" w={198} pad={5}>
      <Big w={78} icon={<ConditionalIcon />} lines={["Conditional", "Formatting"]} caret />
      <Big w={60} icon={<TableIcon />} lines={["Format as", "Table"]} caret />
      <Big w={48} icon={<CellStylesIcon />} lines={["Cell", "Styles"]} caret />
    </Group>
    <Group name="Cells" w={147} pad={7}>
      <Big w={44} icon={<InsertIcon />} lines={["Insert"]} ownCaret />
      <Big w={44} icon={<DeleteIcon />} lines={["Delete"]} ownCaret />
      <Big w={44} icon={<FormatIcon />} lines={["Format"]} ownCaret />
    </Group>
    <EditingGroup />
    <Group name="Add-ins" w={63} center>
      <Big w={60} icon={<AddInsIcon />} lines={["Add-ins"]} disabled />
    </Group>
    <Group name="Form" w={58} center>
      <Big w={56} icon={<FormIcon />} lines={["Form"]} />
    </Group>
    <Group name="Excel Labs" w={58} center>
      <Big w={56} icon={<LabsIcon />} lines={["Excel", "Labs"]} disabled />
    </Group>
    <Group name="AI" w={67} center>
      <Big w={60} icon={<GptIcon />} lines={["ChatGPT", "for Excel"]} disabled />
    </Group>
    <Group name="Claude" w={58} center>
      <Big w={56} icon={<ClaudeIcon size={32} />} lines={["Claude"]} disabled />
    </Group>
    <Spacer />
    <Collapse aria-label="Collapse ribbon"><WideCaret /></Collapse>
  </Ribbon>
);

const FormulaRow = () => (
  <FormulaBar>
    <Field $w={102}>
      <FieldInput $pad={7} aria-label="Name box" defaultValue="B1" />
      <IconButton $w={18} aria-label="Names"><WideCaret /></IconButton>
    </Field>
    <DotsSlot><Dots /></DotsSlot>
    <Field $w={85}>
      <IconButton $w={24} aria-label="Cancel"><Icon w={14}><path d="M1 1 13 13M13 1 1 13" stroke="#bdbdbd" strokeWidth="1.200" /></Icon></IconButton>
      <IconButton $w={22} aria-label="Enter"><Icon><path d="M.5 8.500 5 13 15.500 3" stroke="#bdbdbd" strokeWidth="1.200" /></Icon></IconButton>
      <IconButton $w={22} aria-label="Insert function"><FxLabel>fx</FxLabel></IconButton>
      <IconButton $w={12} aria-label="Function list"><WideCaret color="#8a8a8a" /></IconButton>
    </Field>
    <Spread $w={5} />
    <Field>
      <FieldInput $pad={10} $size={13} aria-label="Formula" defaultValue="Modified from Moore et al. page 218 and following" />
      <IconButton $w={12} aria-label="Expand formula bar"><WideCaret /></IconButton>
    </Field>
  </FormulaBar>
);

const SheetTabBar = () => (
  <SheetTabs>
    <Spread $w={16} />
    <NavArrow aria-label="Previous sheet"><Icon w={8} h={10} color="#9a9a9a"><path d="M6 1 2 5 6 9" strokeWidth="1.300" /></Icon></NavArrow>
    <NavArrow aria-label="Next sheet"><Icon w={8} h={10} color="#9a9a9a"><path d="M2 1 6 5 2 9" strokeWidth="1.300" /></Icon></NavArrow>
    <Spread $w={31} />
    <SheetTab $pad={15}>Sensitivity Report 2</SheetTab>
    <Rule $h={18} $margin="7px 0 0" />
    <ActiveSheetTab><span>Sheet1</span></ActiveSheetTab>
    <Rule $h={18} $margin="7px 0 0" />
    <SheetTab>Sheet2</SheetTab>
    <Rule $h={18} $margin="7px 0 0" />
    <SheetTab>Sheet3</SheetTab>
    <Rule $h={18} $margin="7px 0 0" />
    <Spread $w={33} />
    <NavArrow aria-label="New sheet"><Icon w={11}><path d="M5.500 0V11M0 5.500H11" /></Icon></NavArrow>
    <Spacer />
    <DotsTall><Dots /></DotsTall>
    <HScroll>
      <Icon w={8} h={10}><path d="M7.500 1V9L1 5z" fill="#707070" stroke="#707070" /></Icon>
      <HTrack><HThumb /></HTrack>
      <Icon w={8} h={10}><path d="M.5 1V9L7 5z" fill="#707070" stroke="#707070" /></Icon>
    </HScroll>
  </SheetTabs>
);

const Status = () => (
  <StatusBar>
    <StatusItem>Ready</StatusItem>
    <StatusItem>
      <Icon w={14} color="#333">
        <path d="M6 11.500H.5V.5H12.500V5M.5 3.500H12.500M3 6.500H5M3 8.500H5" strokeWidth="1.200" />
        <circle cx="9.500" cy="9" r="3.800" />
        <circle cx="9.500" cy="9" r="1.300" fill="#333" />
      </Icon>
    </StatusItem>
    <StatusItem>
      <Icon w={14} color="#333">
        <circle cx="5.500" cy="2" r="1.500" />
        <path d="M.5 3.500C2 5 3.500 5 3.500 6.500V9L2 13.500M10.500 3.500C9 5 7.500 5 7.500 6.500M5.500 9 4.500 13M9 8.500c0-2.500 4-2.500 4 0 0 1.500-2 1.500-2 3M11 12.500V14" strokeWidth="1.200" />
      </Icon>
      Accessibility: Unavailable
    </StatusItem>
    <Spacer />
    <ViewButton $on aria-label="Normal view">
      <Icon w={13} color="#222"><path d="M.6.6H12.400V12.400H.6zM4.500.5V12.500M8.500.5V12.500M.5 4.500H12.500M.5 8.500H12.500" strokeWidth="1.200" /></Icon>
    </ViewButton>
    <ViewButton aria-label="Page layout view">
      <Icon w={14} h={13} color="#222"><path d="M.6.6H13.400V12.400H.6zM3.500 2.500H10.500V10.500H3.500zM5 4.500H9M5 6.500H9M5 8.500H9" strokeWidth="1.200" /></Icon>
    </ViewButton>
    <ViewButton aria-label="Page break view">
      <Icon w={14} h={13} color="#222"><path d="M.6.6H13.400V12.400H.6zM4.500.5V7.500M.5 7.500H8.500V.5" strokeWidth="1.200" /></Icon>
    </ViewButton>
    <ZoomButton aria-label="Zoom out"><Icon w={9}><path d="M0 4.500H9" stroke="#222" /></Icon></ZoomButton>
    <ZoomSlider type="range" min="0" max="100" defaultValue="68" aria-label="Zoom" />
    <ZoomButton aria-label="Zoom in"><Icon w={9}><path d="M0 4.500H9M4.500 0V9" stroke="#222" /></Icon></ZoomButton>
    <ZoomValue>200%</ZoomValue>
  </StatusBar>
);

export default function App() {
  return (
    <Page>
      <GlobalStyle />
      <TopBar />
      <RibbonTabs />
      <RibbonBar />
      <FormulaRow />
      <SheetArea>
        <GridView>
          <SheetCanvas><Sheet /></SheetCanvas>
        </GridView>
        <SheetSide />
        <VScroll>
          <Icon w={10} h={8}><path d="M1 7.500H9L5 1z" fill="#707070" stroke="#707070" /></Icon>
          <VTrack><VThumb /></VTrack>
          <Icon w={10} h={8}><path d="M1 .5H9L5 7z" fill="#707070" stroke="#707070" /></Icon>
        </VScroll>
      </SheetArea>
      <SheetTabBar />
      <Status />
    </Page>
  );
}
